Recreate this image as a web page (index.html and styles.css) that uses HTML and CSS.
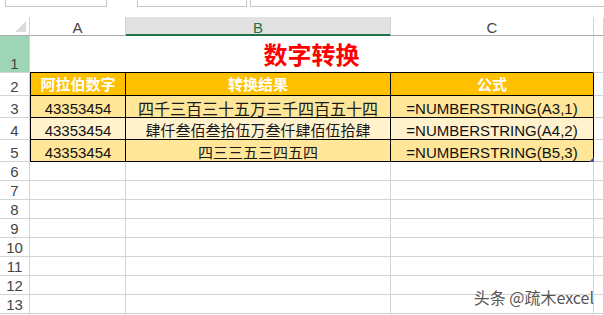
FILE: index.html
```html
<!DOCTYPE html>
<html lang="zh-CN">
<head>
<meta charset="utf-8">
<title>数字转换</title>
<link rel="stylesheet" href="styles.css">
</head>
<body>
<div class="topbar">
  <div class="box box-name"></div>
  <div class="box box-mid"></div>
  <div class="box box-formula"></div>
</div>
<div class="sheet">
  <div class="c ch corner"><svg width="11" height="11" viewBox="0 0 11 11"><polygon points="11,0 11,11 0,11" fill="#dadada"/></svg></div>
  <div class="c ch">A</div>
  <div class="c ch ch-sel">B</div>
  <div class="c ch">C</div>
  <div class="c ch"></div>

  <div class="c rh rh-sel">1</div>
  <div class="c title">数字转换</div>
  <div class="c"></div>

  <div class="c rh">2</div>
  <div class="c tb tb-first head">阿拉伯数字</div>
  <div class="c tb head">转换结果</div>
  <div class="c tb head">公式</div>
  <div class="c"></div>

  <div class="c rh">3</div>
  <div class="c tb tb-first odd num">43353454</div>
  <div class="c tb odd cjk cjk-lg">四千三百三十五万三千四百五十四</div>
  <div class="c tb odd num">=NUMBERSTRING(A3,1)</div>
  <div class="c"></div>

  <div class="c rh">4</div>
  <div class="c tb tb-first even num">43353454</div>
  <div class="c tb even cjk">肆仟叁佰叁拾伍万叁仟肆佰伍拾肆</div>
  <div class="c tb even num">=NUMBERSTRING(A4,2)</div>
  <div class="c"></div>

  <div class="c rh">5</div>
  <div class="c tb tb-first odd num">43353454</div>
  <div class="c tb odd cjk">四三三五三四五四</div>
  <div class="c tb odd num handle-cell">=NUMBERSTRING(B5,3)<span class="handle"></span></div>
  <div class="c"></div>

  <div class="c rh">6</div><div class="c"></div><div class="c"></div><div class="c"></div><div class="c"></div>
  <div class="c rh">7</div><div class="c"></div><div class="c"></div><div class="c"></div><div class="c"></div>
  <div class="c rh">8</div><div class="c"></div><div class="c"></div><div class="c"></div><div class="c"></div>
  <div class="c rh">9</div><div class="c"></div><div class="c"></div><div class="c"></div><div class="c"></div>
  <div class="c rh">10</div><div class="c"></div><div class="c"></div><div class="c"></div><div class="c"></div>
  <div class="c rh">11</div><div class="c"></div><div class="c"></div><div class="c"></div><div class="c"></div>
  <div class="c rh">12</div><div class="c"></div><div class="c"></div><div class="c"></div><div class="c"></div>
  <div class="c rh">13</div><div class="c"></div><div class="c"></div><div class="c"></div><div class="c"></div>
  <div class="c rh last"></div><div class="c last"></div><div class="c last"></div><div class="c last"></div><div class="c last"></div>
</div>
<div class="watermark">头条 @疏木excel</div>
</body>
</html>
```
FILE: styles.css
```css
* { box-sizing: border-box; }
html, body {
  margin: 0;
  padding: 0;
  height: 315px;
  overflow: hidden;
  background: #fff;
}
body {
  position: relative;
  width: 604px;
  font-family: "Liberation Sans", Arial, sans-serif;
}
.topbar {
  height: 17px;
  display: flex;
  align-items: flex-start;
  padding-left: 5px;
}
.box {
  height: 7px;
  border: 1px solid #c6c6c6;
  border-top: 0;
}
.box-name { width: 102px; }
.box-mid { width: 110px; margin-left: 30px; }
.box-formula { flex: 1; margin-left: 3px; border-right: 0; }

.sheet {
  display: grid;
  grid-template-columns: 30px 96px 265px 203px 1fr;
  grid-template-rows: 19px 37px 23px 22px 22px 22px repeat(8, 19px) 1px;
}
.c {
  display: flex;
  align-items: center;
  justify-content: center;
  min-width: 0;
  white-space: nowrap;
  border-right: 1px solid #d4d4d4;
  border-bottom: 1px solid #d4d4d4;
}
.last { border-bottom: 0; }
.ch {
  align-items: flex-end;
  border-bottom-color: #ababab;
  font-size: 15px;
  line-height: 14px;
  color: #444;
}
.ch-sel {
  background: #e1e1e1;
  color: #217346;
  border-bottom: 2px solid #217346;
  line-height: 12px;
}
.corner {
  justify-content: flex-end;
  padding: 0 3px 3px 0;
}
.corner svg { display: block; }
.rh {
  align-items: flex-end;
  font-size: 15px;
  line-height: 16px;
  color: #444;
}
.rh-sel { background: #9fd5b7; }
.title {
  grid-column: 2 / 5;
  border-bottom-color: #000;
  color: #ff0000;
  font-family: "Noto Sans CJK SC", sans-serif;
  font-weight: bold;
  font-size: 24px;
  line-height: 30px;
}
.tb {
  border-right-color: #000;
  border-bottom-color: #000;
}
.tb-first { border-left: 1px solid #000; }
.head {
  background: #ffc000;
  color: #fff;
  font-family: "Noto Sans CJK SC", sans-serif;
  font-weight: bold;
  font-size: 15px;
  line-height: 20px;
}
.odd { background: #ffe699; }
.even { background: #fff2cc; }
.num {
  padding-top: 3px;
  font-size: 15px;
  line-height: 17px;
  color: #111;
}
.cjk {
  padding-top: 3px;
  font-family: "Noto Sans CJK SC", sans-serif;
  font-size: 15px;
  line-height: 18px;
  color: #1a1a1a;
}
.cjk-lg { font-size: 16px; }
.handle-cell { position: relative; }
.handle {
  position: absolute;
  right: -1px;
  bottom: -1px;
  width: 0;
  height: 0;
  border-left: 5px solid transparent;
  border-bottom: 5px solid #3f51b5;
}
.watermark {
  position: absolute;
  top: 287px;
  right: 10px;
  font-family: "Noto Sans CJK SC", sans-serif;
  font-size: 16px;
  line-height: 20px;
  color: #555;
  text-shadow: 0 0 2px #fff, 0 0 1px #fff;
}
```
